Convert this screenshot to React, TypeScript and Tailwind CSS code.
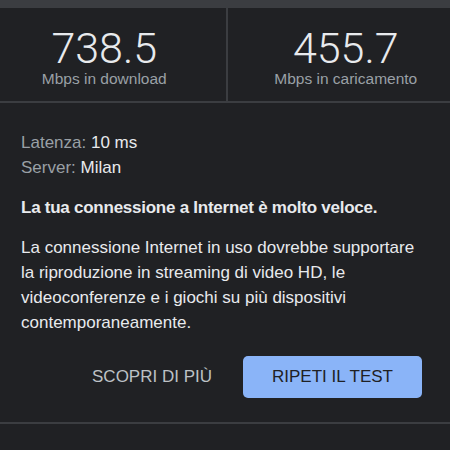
import React from "react";

export default function App() {
  return (
    <div
      className="w-[450px] h-[450px] overflow-hidden bg-[#202124] flex flex-col"
      style={{ fontFamily: '"Liberation Sans", Arial, sans-serif' }}
    >
      <div className="h-[8px] bg-[#3b3d41] shrink-0" />
      <div className="flex h-[95px] border-b-2 border-[#3b3d41] shrink-0">
        <div className="flex-1 flex flex-col items-center pt-[18px] pr-[17px]">
          <div
            className="text-[43px] leading-[44px] font-light text-[#e8eaed]"
            style={{ fontFamily: 'Roboto, "Liberation Sans", sans-serif' }}
          >
            738.5
          </div>
          <div className="text-[15.5px] leading-[18px] text-[#9aa0a6]">
            Mbps in download
          </div>
        </div>
        <div className="w-[2px] bg-[#3b3d41]" />
        <div className="flex-1 flex flex-col items-center pt-[18px] pl-[14px]">
          <div
            className="text-[43px] leading-[44px] font-light text-[#e8eaed]"
            style={{ fontFamily: 'Roboto, "Liberation Sans", sans-serif' }}
          >
            455.7
          </div>
          <div className="text-[15.5px] leading-[18px] text-[#9aa0a6]">
            Mbps in caricamento
          </div>
        </div>
      </div>
      <div className="px-[21px] pt-[27px] text-[17px]">
        <div className="leading-[25px]">
          <span className="text-[#9aa0a6]">Latenza: </span>
          <span className="text-[#e8eaed]">10 ms</span>
        </div>
        <div className="leading-[25px]">
          <span className="text-[#9aa0a6]">Server: </span>
          <span className="text-[#e8eaed]">Milan</span>
        </div>
        <div className="mt-[15px] leading-[25px] font-bold tracking-[-0.25px] text-[#e8eaed]">
          La tua connessione a Internet è molto veloce.
        </div>
        <div className="mt-[15px] leading-[25px] text-[#e8eaed]">
          La connessione Internet in uso dovrebbe supportare la riproduzione in
          streaming di video HD, le videoconferenze e i giochi su più
          dispositivi contemporaneamente.
        </div>
        <div className="flex justify-end items-center mt-[21px] gap-[31px] pr-[7px]">
          <div className="text-[17px] text-[#bdc1c6]">SCOPRI DI PIÙ</div>
          <div className="w-[179px] h-[42px] rounded-[5px] bg-[#8ab4f8] flex items-center justify-center text-[17px] text-[#202124]">
            RIPETI IL TEST
          </div>
        </div>
      </div>
      <div className="mt-[24px] h-[2px] bg-[#3b3d41]" />
    </div>
  );
}
